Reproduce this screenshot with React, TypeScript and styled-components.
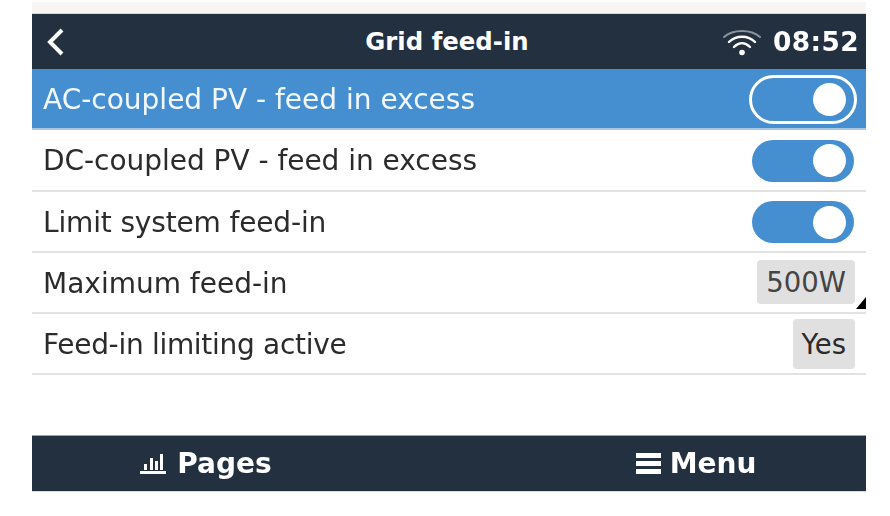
import React from 'react';
import styled, { createGlobalStyle } from 'styled-components';

const Global = createGlobalStyle`
  html, body { margin: 0; padding: 0; background: #fff; }
  #root { width: 890px; height: 516px; overflow: hidden; }
`;

const Page = styled.div`
  width: 890px;
  height: 516px;
  padding: 2px 24px 0 32px;
  box-sizing: border-box;
  font-family: "DejaVu Sans", sans-serif;
  color: #2b2b2b;
  filter: blur(0.6px);
`;

const TopStrip = styled.div`
  height: 11px;
  background: #f8f6f2;
  border-bottom: 1px solid #dcd9d2;
`;

const Bar = styled.div`
  height: 55px;
  background: #22303f;
  color: #fff;
  font-weight: 700;
`;

const Header = styled(Bar)`
  display: grid;
  grid-template-columns: 1fr auto 1fr;
  align-items: center;
  padding: 0 7px 0 12px;
`;

const Title = styled.div`
  font-size: 24.4px;
  padding-right: 9px;
`;

const Status = styled.div`
  display: flex;
  align-items: center;
  justify-content: flex-end;
  gap: 11px;
  font-size: 26.4px;
  letter-spacing: 0.4px;
`;

const Row = styled.div<{ $active?: boolean }>`
  height: 61.25px;
  box-sizing: border-box;
  display: flex;
  align-items: center;
  justify-content: space-between;
  padding: 0 11px;
  font-size: 28px;
  background: ${p => (p.$active ? '#458fd1' : '#fff')};
  color: ${p => (p.$active ? '#f2f7fc' : '#2b2b2b')};
  border-bottom: 2px solid ${p => (p.$active ? '#a9c7e3' : '#e2e2e2')};
`;

const Label = styled.span<{ $tracking?: number }>`
  margin-top: 2px;
  letter-spacing: ${p => p.$tracking ?? 0}px;
`;

const Switch = styled.div<{ $outlined?: boolean }>`
  width: 102px;
  height: 42px;
  box-sizing: border-box;
  border-radius: 21px;
  display: flex;
  align-items: center;
  justify-content: flex-end;
  padding-right: 8px;
  margin: 2px 1px 0 0;
  background: #458fd1;
  ${p =>
    p.$outlined &&
    `
    width: 108px;
    height: 49px;
    border-radius: 25px;
    border: 3px solid #fff;
    margin-right: -2px;
  `}
`;

const Knob = styled.div`
  width: 33px;
  height: 33px;
  border-radius: 50%;
  background: #fff;
`;

const Value = styled.div<{ $tall?: boolean }>`
  position: relative;
  height: ${p => (p.$tall ? '50px' : '44px')};
  box-sizing: border-box;
  padding: 0 9px;
  display: flex;
  align-items: center;
  background: #e0e0e0;
  border-radius: 4px;
  font-size: 27.5px;
  color: ${p => (p.$tall ? '#2b2b2b' : '#444')};
`;

const Corner = styled.div`
  position: absolute;
  right: -11px;
  bottom: -5px;
  width: 0;
  height: 0;
  border-style: solid;
  border-width: 0 0 12px 10px;
  border-color: transparent transparent #000 transparent;
`;

const Spacer = styled.div`
  height: 61px;
`;

const Footer = styled(Bar)`
  display: grid;
  grid-template-columns: 1fr 1fr;
  font-size: 28px;
  box-shadow: 0 -1px 0 #9aa0a6, 0 1px 0 #dcd9d2;
`;

const FooterItem = styled.div`
  display: flex;
  align-items: center;
  justify-content: center;
`;

const PagesItem = styled(FooterItem)`
  padding-right: 69px;
  gap: 11px;
`;

const MenuItem = styled(FooterItem)`
  padding-left: 77px;
  gap: 8px;
`;

const App: React.FC = () => (
  <Page>
    <Global />
    <TopStrip />
    <Header>
      <svg width="22" height="30" viewBox="0 0 22 30" fill="none">
        <path d="M18 3 L6 15 L18 27" stroke="#fff" strokeWidth="4" />
      </svg>
      <Title>Grid feed-in</Title>
      <Status>
        <svg width="40" height="28" viewBox="0 0 40 28" fill="none" strokeLinecap="round">
          <path d="M2 9 C11 1 29 1 38 9" stroke="#8b939b" strokeWidth="2" />
          <path d="M7 14 C14 7 26 7 33 14" stroke="#fff" strokeWidth="2.4" />
          <path d="M12 19 C17 14 23 14 28 19" stroke="#fff" strokeWidth="2.4" />
          <circle cx="20" cy="24.5" r="2.8" fill="#fff" />
        </svg>
        08:52
      </Status>
    </Header>
    <Row $active>
      <Label>AC-coupled PV - feed in excess</Label>
      <Switch $outlined><Knob /></Switch>
    </Row>
    <Row>
      <Label $tracking={-0.03}>DC-coupled PV - feed in excess</Label>
      <Switch><Knob /></Switch>
    </Row>
    <Row>
      <Label $tracking={-0.15}>Limit system feed-in</Label>
      <Switch><Knob /></Switch>
    </Row>
    <Row>
      <Label>Maximum feed-in</Label>
      <Value>500W<Corner /></Value>
    </Row>
    <Row>
      <Label $tracking={-0.3}>Feed-in limiting active</Label>
      <Value $tall>Yes</Value>
    </Row>
    <Spacer />
    <Footer>
      <PagesItem>
        <svg width="26" height="24" viewBox="0 0 26 24" fill="#fff">
          <rect x="0" y="19" width="26" height="3" />
          <rect x="4" y="12" width="3" height="6" />
          <rect x="10" y="6" width="3" height="12" />
          <rect x="15" y="9" width="3" height="9" />
          <rect x="20" y="2" width="3" height="16" />
        </svg>
        Pages
      </PagesItem>
      <MenuItem>
        <svg width="26" height="22" viewBox="0 0 26 22" fill="#fff">
          <rect x="0" y="0" width="25" height="5" />
          <rect x="0" y="8" width="25" height="5" />
          <rect x="0" y="16" width="25" height="5" />
        </svg>
        Menu
      </MenuItem>
    </Footer>
  </Page>
);

export default App;
